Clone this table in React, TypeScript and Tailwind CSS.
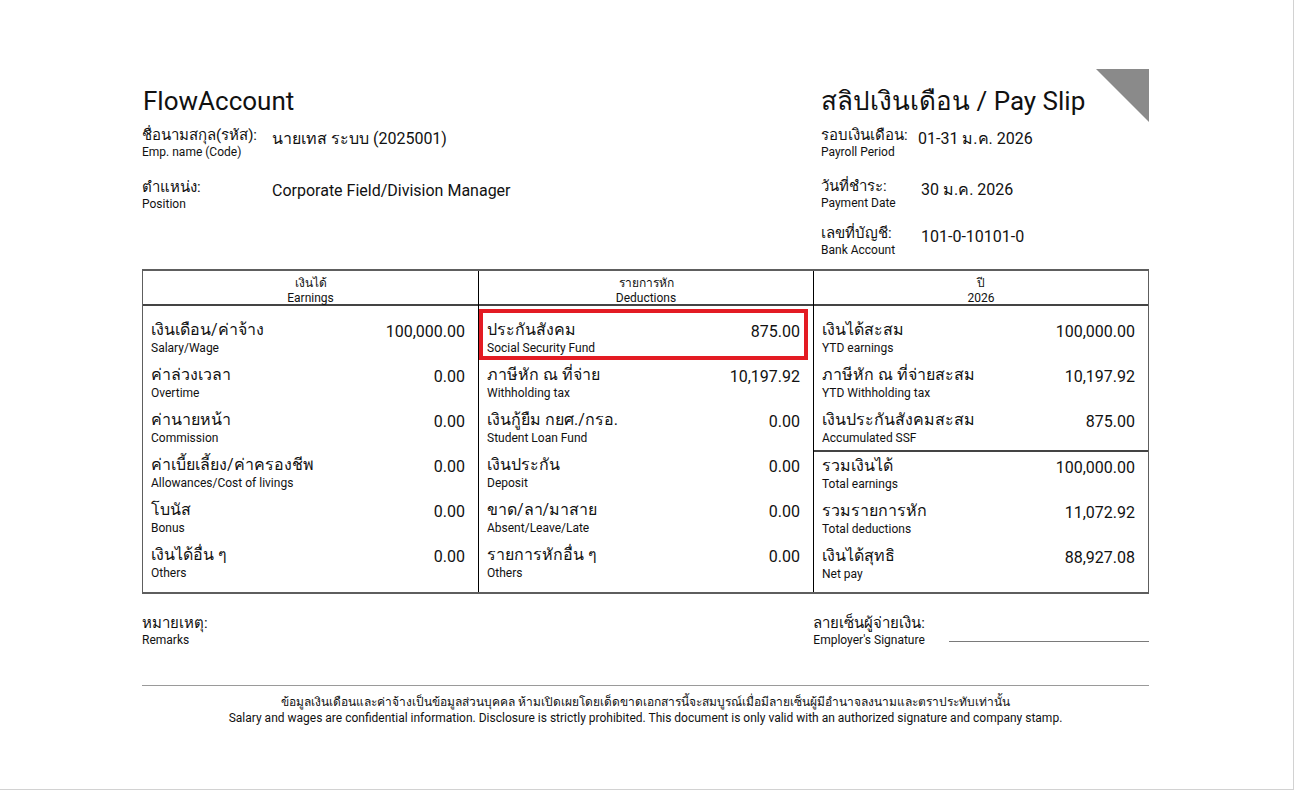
import React from 'react';

type Item = { th: string; en: string; value: string };

const earnings: Item[] = [
  { th: 'เงินเดือน/ค่าจ้าง', en: 'Salary/Wage', value: '100,000.00' },
  { th: 'ค่าล่วงเวลา', en: 'Overtime', value: '0.00' },
  { th: 'ค่านายหน้า', en: 'Commission', value: '0.00' },
  { th: 'ค่าเบี้ยเลี้ยง/ค่าครองชีพ', en: 'Allowances/Cost of livings', value: '0.00' },
  { th: 'โบนัส', en: 'Bonus', value: '0.00' },
  { th: 'เงินได้อื่น ๆ', en: 'Others', value: '0.00' },
];

const deductions: Item[] = [
  { th: 'ประกันสังคม', en: 'Social Security Fund', value: '875.00' },
  { th: 'ภาษีหัก ณ ที่จ่าย', en: 'Withholding tax', value: '10,197.92' },
  { th: 'เงินกู้ยืม กยศ./กรอ.', en: 'Student Loan Fund', value: '0.00' },
  { th: 'เงินประกัน', en: 'Deposit', value: '0.00' },
  { th: 'ขาด/ลา/มาสาย', en: 'Absent/Leave/Late', value: '0.00' },
  { th: 'รายการหักอื่น ๆ', en: 'Others', value: '0.00' },
];

const ytd: Item[] = [
  { th: 'เงินได้สะสม', en: 'YTD earnings', value: '100,000.00' },
  { th: 'ภาษีหัก ณ ที่จ่ายสะสม', en: 'YTD Withholding tax', value: '10,197.92' },
  { th: 'เงินประกันสังคมสะสม', en: 'Accumulated SSF', value: '875.00' },
];

const totals: Item[] = [
  { th: 'รวมเงินได้', en: 'Total earnings', value: '100,000.00' },
  { th: 'รวมรายการหัก', en: 'Total deductions', value: '11,072.92' },
  { th: 'เงินได้สุทธิ', en: 'Net pay', value: '88,927.08' },
];

function Row({ item, short }: { item: Item; short?: boolean }) {
  return (
    <div className={`flex justify-between pl-2 pr-[13px] ${short ? 'h-[40px]' : 'h-[45px]'}`}>
      <div>
        <div className="text-[16px] leading-[20px]">{item.th}</div>
        <div className="text-[12px] leading-[16px]">{item.en}</div>
      </div>
      <div className="text-[16px] leading-[22px] mt-[1px]">{item.value}</div>
    </div>
  );
}

function Info({ th, en, value, labelW }: { th: string; en: string; value: string; labelW: string }) {
  return (
    <div className="flex items-start">
      <div className={labelW}>
        <div className="text-[15px] leading-[20px]">{th}</div>
        <div className="text-[12px] leading-[14px]">{en}</div>
      </div>
      <div className="text-[16px] leading-[22px] mt-[3px]">{value}</div>
    </div>
  );
}

function HeadCell({ th, en, first }: { th: string; en: string; first?: boolean }) {
  return (
    <div className={`flex flex-col items-center pt-[5px] text-[12px] leading-[15px] ${first ? '' : 'border-l border-black'}`}>
      <div>{th}</div>
      <div>{en}</div>
    </div>
  );
}

export default function App() {
  return (
    <div
      className="w-[1294px] h-[790px] bg-white border-r border-b border-[#d2d2d2] text-[#111] pt-[69px]"
      style={{ fontFamily: 'Roboto, "Noto Sans", sans-serif' }}
    >
      <div className="relative ml-[142px] w-[1007px]">
        <div className="absolute top-0 right-0 w-[53px] h-[53px] bg-[#8a8a8a] [clip-path:polygon(0_0,100%_0,100%_100%)]" />

        <div className="flex pt-[16px]">
          <div className="flex-1">
            <h1 className="text-[26px] leading-[32px] pl-[1px]">FlowAccount</h1>
            <div className="flex flex-col gap-[18px] mt-[8px]">
              <Info labelW="w-[130px]" th="ชื่อนามสกุล(รหัส):" en="Emp. name (Code)" value="นายเทส ระบบ (2025001)" />
              <Info labelW="w-[130px]" th="ตำแหน่ง:" en="Position" value="Corporate Field/Division Manager" />
            </div>
          </div>
          <div className="w-[328px]">
            <h1 className="text-[26px] leading-[32px]">สลิปเงินเดือน / Pay Slip</h1>
            <div className="flex flex-col mt-[8px]">
              <Info labelW="w-[97px]" th="รอบเงินเดือน:" en="Payroll Period" value="01-31 ม.ค. 2026" />
              <div className="mt-[17px]">
                <Info labelW="w-[100px]" th="วันที่ชำระ:" en="Payment Date" value="30 ม.ค. 2026" />
              </div>
              <div className="mt-[13px]">
                <Info labelW="w-[100px]" th="เลขที่บัญชี:" en="Bank Account" value="101-0-10101-0" />
              </div>
            </div>
          </div>
        </div>

        <div className="mt-[12px] border-y-2 border-x border-[#5e5e5e]">
          <div className="grid grid-cols-3 h-[35px] border-b-2 border-[#444]">
            <HeadCell first th="เงินได้" en="Earnings" />
            <HeadCell th="รายการหัก" en="Deductions" />
            <HeadCell th="ปี" en="2026" />
          </div>
          <div className="grid grid-cols-3 h-[286px]">
            <div className="pt-[14px]">
              {earnings.map((e) => (
                <Row key={e.en} item={e} />
              ))}
            </div>
            <div className="relative border-l border-black pt-[14px]">
              <div className="absolute left-0 right-[5px] top-[3px] h-[51px] border-4 border-[#e31b23]" />
              {deductions.map((d) => (
                <Row key={d.en} item={d} />
              ))}
            </div>
            <div className="border-l border-black">
              <div className="pt-[14px] border-b-2 border-[#444]">
                {ytd.map((y, i) => (
                  <Row key={y.en} item={y} short={i === 2} />
                ))}
              </div>
              <div className="pt-[4px]">
                {totals.map((t) => (
                  <Row key={t.en} item={t} />
                ))}
              </div>
            </div>
          </div>
        </div>

        <div className="grid grid-cols-3 mt-[19px] h-[72px]">
          <div className="col-span-2">
            <div className="text-[15px] leading-[20px]">หมายเหตุ:</div>
            <div className="text-[12px] leading-[14px]">Remarks</div>
          </div>
          <div className="flex items-start">
            <div>
              <div className="text-[15px] leading-[20px]">ลายเซ็นผู้จ่ายเงิน:</div>
              <div className="text-[12px] leading-[14px]">Employer's Signature</div>
            </div>
            <div className="flex-1 ml-[24px] mt-[28px] border-b border-[#7a7a7a]" />
          </div>
        </div>

        <div className="border-t border-[#9a9a9a] pt-[8px] text-center text-[12px] leading-[16px]">
          <div>ข้อมูลเงินเดือนและค่าจ้างเป็นข้อมูลส่วนบุคคล ห้ามเปิดเผยโดยเด็ดขาดเอกสารนี้จะสมบูรณ์เมื่อมีลายเซ็นผู้มีอำนาจลงนามและตราประทับเท่านั้น</div>
          <div>Salary and wages are confidential information. Disclosure is strictly prohibited. This document is only valid with an authorized signature and company stamp.</div>
        </div>
      </div>
    </div>
  );
}
